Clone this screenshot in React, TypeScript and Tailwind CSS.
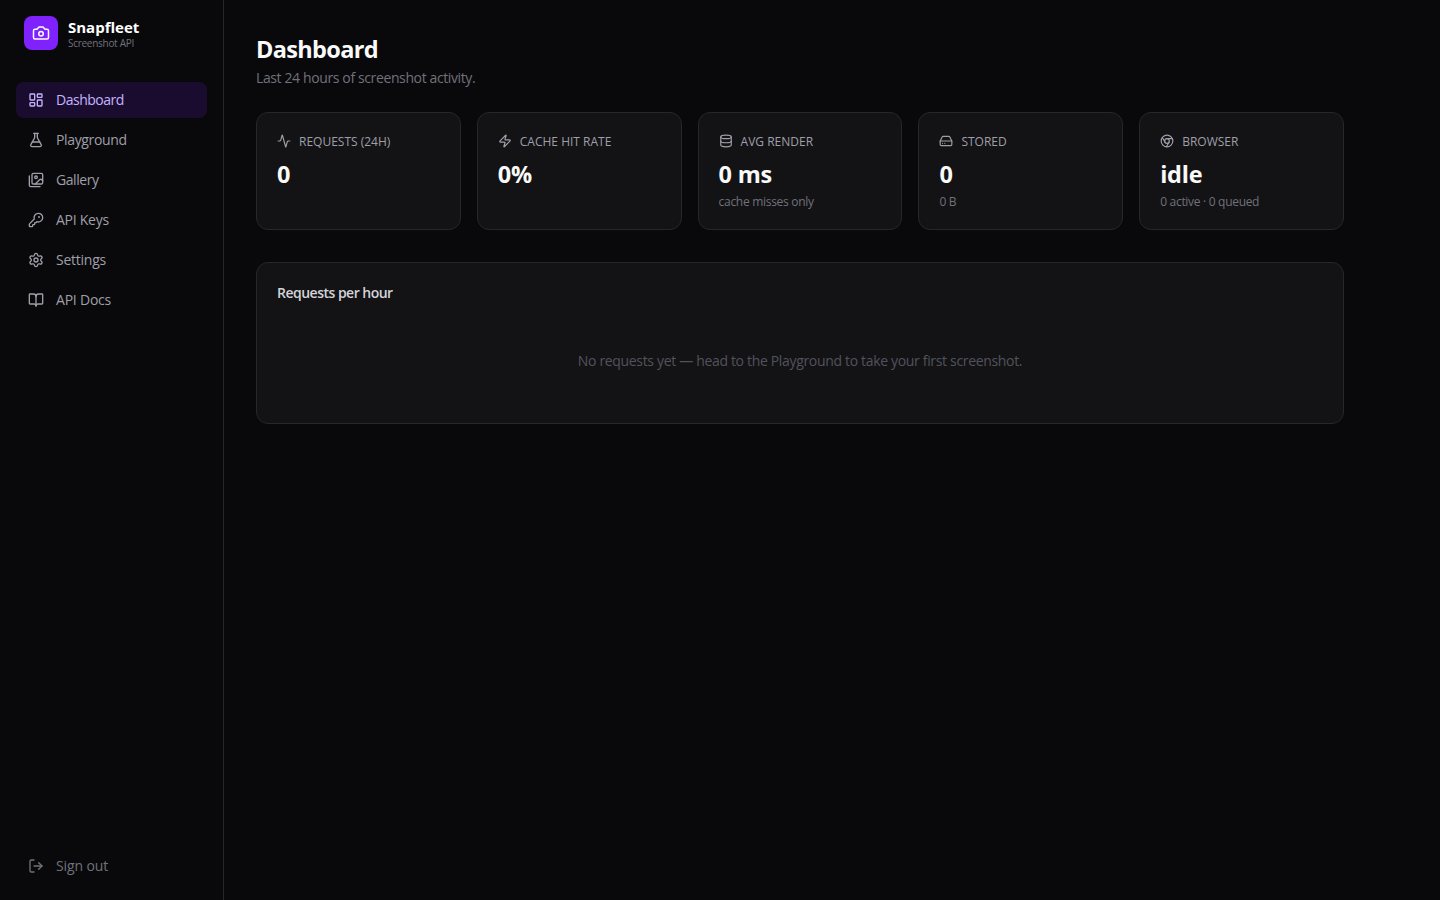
import type { ComponentType } from "react";
import {
  Activity,
  BookOpen,
  Camera,
  Chrome,
  Database,
  FlaskConical,
  HardDrive,
  KeyRound,
  LayoutDashboard,
  LogOut,
  Settings,
  Zap,
} from "lucide-react";

type Icon = ComponentType<{ className?: string }>;

function ImagesIcon({ className }: { className?: string }) {
  return (
    <svg className={className} viewBox="0 0 24 24" fill="none" stroke="currentColor" strokeWidth="2" strokeLinecap="round" strokeLinejoin="round" aria-hidden="true">
      <path d="M18 22H4a2 2 0 0 1-2-2V6" />
      <path d="m22 13-1.296-1.296a2.41 2.41 0 0 0-3.408 0L11 18" />
      <circle cx="12" cy="8" r="2" />
      <rect width="16" height="16" x="6" y="2" rx="2" />
    </svg>
  );
}

const nav: { label: string; icon: Icon; tracking: string; active?: boolean }[] = [
  { label: "Dashboard", icon: LayoutDashboard, tracking: "tracking-[-0.48px]", active: true },
  { label: "Playground", icon: FlaskConical, tracking: "tracking-[-0.35px]" },
  { label: "Gallery", icon: ImagesIcon, tracking: "tracking-[-0.42px]" },
  { label: "API Keys", icon: KeyRound, tracking: "tracking-[-0.27px]" },
  { label: "Settings", icon: Settings, tracking: "tracking-[-0.25px]" },
  { label: "API Docs", icon: BookOpen, tracking: "tracking-[-0.22px]" },
];

const stats: { label: string; value: string; sub?: string; icon: Icon }[] = [
  { label: "Requests (24h)", value: "0", icon: Activity },
  { label: "Cache hit rate", value: "0%", icon: Zap },
  { label: "Avg render", value: "0 ms", sub: "cache misses only", icon: Database },
  { label: "Stored", value: "0", sub: "0 B", icon: HardDrive },
  { label: "Browser", value: "idle", sub: "0 active · 0 queued", icon: Chrome },
];

function Sidebar() {
  return (
    <aside className="flex w-56 shrink-0 flex-col border-r border-zinc-800 p-4">
      <div className="mb-8 flex items-center gap-2.5 px-2">
        <div className="flex size-[34px] items-center justify-center rounded-lg bg-violet-600">
          <Camera className="size-[18px] text-white" />
        </div>
        <div>
          <p className="text-[15px] leading-5 font-bold text-white">Snapfleet</p>
          <p className="text-[10px] leading-3 tracking-[-0.28px] text-zinc-500">Screenshot API</p>
        </div>
      </div>

      <nav className="flex flex-1 flex-col gap-1">
        {nav.map(({ label, icon: NavIcon, tracking, active }) => (
          <a
            key={label}
            href="#"
            className={`flex items-center gap-3 rounded-lg px-3 py-2 text-sm ${active ? "bg-violet-600/15 text-violet-300" : "text-zinc-400"}`}
          >
            <NavIcon className="size-4" />
            <span className={tracking}>{label}</span>
          </a>
        ))}
      </nav>

      <button className="flex items-center gap-3 rounded-lg px-3 py-2 text-sm text-zinc-500">
        <LogOut className="size-4" />
        <span className="tracking-[-0.1px]">Sign out</span>
      </button>
    </aside>
  );
}

function StatCard({ label, value, sub, icon: StatIcon }: (typeof stats)[number]) {
  return (
    <div className="rounded-xl border border-zinc-800 bg-[#131315] p-5">
      <div className="flex h-4 items-center gap-2 text-xs text-zinc-400 uppercase">
        <StatIcon className="size-3.5" />
        <span className="pt-0.5 leading-[14px]">{label}</span>
      </div>
      <p className="mt-2 pt-0.5 text-[23.5px] leading-[30px] font-bold tracking-[-0.25px] text-zinc-50">{value}</p>
      {sub && <p className="mt-1 pt-0.5 text-xs leading-[14px] tracking-[-0.3px] text-zinc-500">{sub}</p>}
    </div>
  );
}

export default function App() {
  return (
    <div className="flex h-screen bg-[#09090b] font-['Open_Sans','Noto_Sans',sans-serif] text-zinc-100">
      <Sidebar />

      <main className="flex-1">
        <div className="max-w-6xl p-8">
          <h1 className="pt-0.5 text-[23.5px] leading-[30px] font-bold tracking-[-0.65px] text-zinc-50">Dashboard</h1>
          <p className="mt-1 text-sm tracking-[-0.38px] text-zinc-500">Last 24 hours of screenshot activity.</p>

          <div className="mt-6 grid grid-cols-5 gap-4">
            {stats.map((stat) => (
              <StatCard key={stat.label} {...stat} />
            ))}
          </div>

          <section className="mt-8 rounded-xl border border-zinc-800 bg-[#131315] p-5">
            <h2 className="mb-4 text-sm font-semibold tracking-[-0.51px] text-zinc-300">Requests per hour</h2>
            <p className="py-8 text-center text-sm tracking-[-0.33px] text-zinc-600">
              No requests yet — head to the Playground to take your first screenshot.
            </p>
          </section>
        </div>
      </main>
    </div>
  );
}
